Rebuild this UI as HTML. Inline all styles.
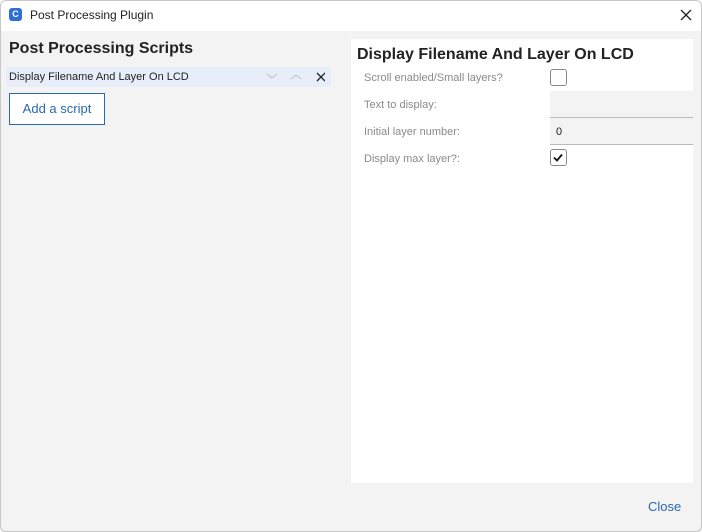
<!DOCTYPE html><html><head><style>
body{margin:0;width:702px;height:532px;background:#fff;font-family:"Liberation Sans",sans-serif;overflow:hidden;position:relative}
.win{position:absolute;left:0;top:0;width:702px;height:532px;background:#f3f3f3;overflow:hidden}
.bd{position:absolute;left:0;top:0;width:700px;height:530px;border:1px solid #c8c8c8;border-radius:6px;z-index:5}
.tb{position:absolute;left:0;top:0;width:702px;height:31px;background:#fff}
.a{position:absolute;white-space:nowrap}
.lbl{font-size:11px;color:#8a8a8a}
</style></head><body><div class="win">
<div class="tb">
<div class="a" style="left:9px;top:8px;width:13px;height:13px;background:#2d6fd6;border-radius:3px;color:#fff;font-size:9px;font-weight:bold;text-align:center;line-height:13px">C</div>
<div class="a" style="left:30px;top:8px;font-size:12px;color:#222">Post Processing Plugin</div>
<svg class="a" style="left:680px;top:9px" width="12" height="12"><path d="M1 1L11 11M11 1L1 11" stroke="#222" stroke-width="1.3"/></svg>
</div>
<div class="a" style="left:9px;top:40px;font-size:16px;font-weight:bold;color:#222">Post Processing Scripts</div>
<div class="a" style="left:6px;top:67px;width:325px;height:20px;background:#e7eef9"></div>
<div class="a" style="left:9px;top:71px;font-size:11px;color:#222">Display Filename And Layer On LCD</div>
<svg class="a" style="left:265px;top:71px" width="60" height="12"><path d="M2 3l5 4 5-4" fill="none" stroke="#bbb"/><path d="M26 8l5-4 5 4" fill="none" stroke="#bbb"/><path d="M52 2l8 8M60 2l-8 8" stroke="#222" stroke-width="1.3"/></svg>
<div class="a" style="left:9px;top:93px;width:94px;height:30px;border:1px solid #2a68b0;background:#fff;color:#2a68b0;font-size:13px;text-align:center;line-height:30px">Add a script</div>
<div class="a" style="left:351px;top:39px;width:342px;height:444px;background:#fff"></div>
<div class="a" style="left:357px;top:46px;font-size:16px;font-weight:bold;color:#222">Display Filename And Layer On LCD</div>
<div class="a lbl" style="left:364px;top:72px">Scroll enabled/Small layers?</div>
<div class="a" style="left:550px;top:69px;width:15px;height:15px;border:1px solid #888;border-radius:3px;background:#fff"></div>
<div class="a lbl" style="left:364px;top:99px">Text to display:</div>
<div class="a" style="left:550px;top:91px;width:143px;height:26px;background:#f3f3f3;border-bottom:1px solid #bbb"></div>
<div class="a lbl" style="left:364px;top:126px">Initial layer number:</div>
<div class="a" style="left:550px;top:118px;width:143px;height:26px;background:#f3f3f3;border-bottom:1px solid #bbb"></div>
<div class="a" style="left:556px;top:126px;font-size:11px;color:#222">0</div>
<div class="a lbl" style="left:364px;top:153px">Display max layer?:</div>
<div class="a" style="left:550px;top:149px;width:15px;height:15px;border:1px solid #888;border-radius:3px;background:#fff"></div>
<svg class="a" style="left:553px;top:153px" width="10" height="9"><path d="M1 4.5l3 3 5-6" fill="none" stroke="#111" stroke-width="1.8"/></svg>
<div class="a" style="left:648px;top:499px;font-size:13px;color:#2a68b0">Close</div>
<div class="bd"></div>
</div></body></html>
